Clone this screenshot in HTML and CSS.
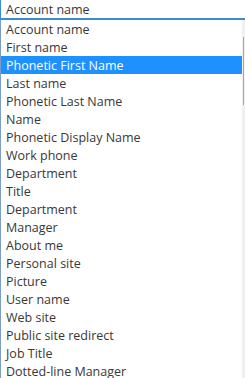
FILE: index.html
```html
<!DOCTYPE html>
<html>
  <head>
    <title>Property picker</title>
    <link rel="stylesheet" href="styles.css">
  </head>
  <body>
    <div class="picker">
      <div class="current">Account name</div>
      <div class="dropdown">
        <ul class="options">
          <li>Account name</li>
          <li>First name</li>
          <li class="active">Phonetic First Name</li>
          <li>Last name</li>
          <li>Phonetic Last Name</li>
          <li>Name</li>
          <li>Phonetic Display Name</li>
          <li>Work phone</li>
          <li>Department</li>
          <li>Title</li>
          <li>Department</li>
          <li>Manager</li>
          <li>About me</li>
          <li>Personal site</li>
          <li>Picture</li>
          <li>User name</li>
          <li>Web site</li>
          <li>Public site redirect</li>
          <li>Job Title</li>
          <li>Dotted-line Manager</li>
        </ul>
        <div class="scrollbar">
          <div class="thumb"></div>
        </div>
      </div>
    </div>
  </body>
</html>
```

FILE: styles.css
```css
* {
  box-sizing: border-box;
}
body {
  margin: 0;
  width: 245px;
  height: 378px;
  overflow: hidden;
  background: #fff;
  font-family: "Open Sans", "Liberation Sans", sans-serif;
  font-size: 12.5px;
  color: #383838;
}
.picker {
  width: 245px;
}
.current {
  height: 20px;
  line-height: 18px;
  padding: 1px 0 0 5px;
  border-left: 1px solid #3a8cd8;
  border-bottom: 2px solid #3a8cd8;
}
.dropdown {
  display: flex;
  height: 358px;
  border-left: 1px solid #7d9ec4;
  overflow: hidden;
}
.options {
  flex: 1;
  list-style: none;
  margin: 0;
  padding: 0;
}
.options li {
  height: 18px;
  line-height: 17px;
  padding: 1px 0 0 5px;
  white-space: nowrap;
}
.options li.active {
  background: #1e90ff;
  color: #fff;
}
.scrollbar {
  width: 3px;
  background: #f0f0f0;
  padding-top: 17px;
  padding-left: 1px;
}
.thumb {
  width: 1px;
  height: 68px;
  background: #a6a6a6;
}
```
